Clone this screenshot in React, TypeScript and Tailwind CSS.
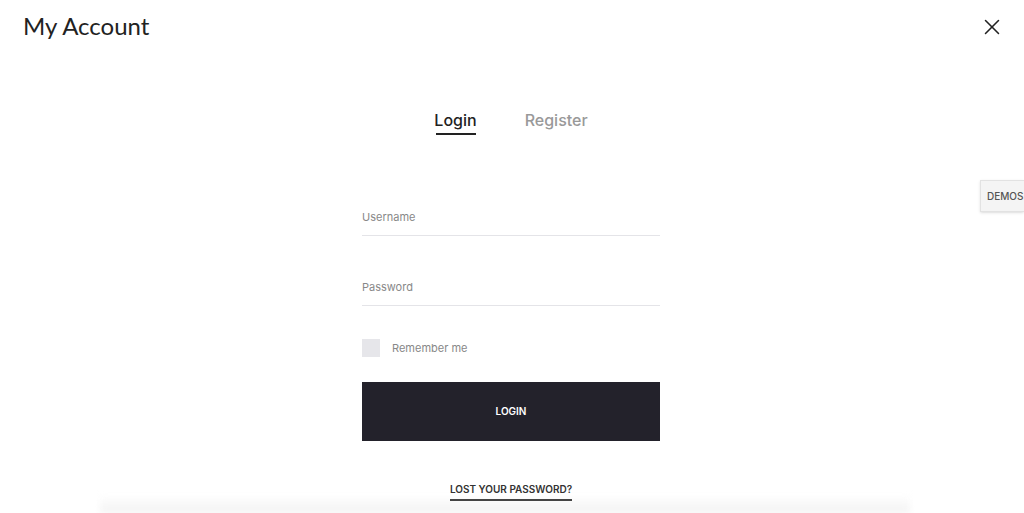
import { X } from 'lucide-react';

export default function App() {
  return (
    <div className="relative h-[513px] w-[1024px] overflow-hidden bg-white font-['Inter',sans-serif]">
      <div className="pointer-events-none absolute bottom-0 left-[100px] h-[18px] w-[810px] bg-gradient-to-b from-white to-[#f2f2f2] blur-[3px]" />

      <div className="flex items-start justify-between pl-[23px] pr-[19px] pt-[10px]">
        <h1 className="font-['Lato',sans-serif] text-[24px] leading-[32px] text-[#222]">My Account</h1>
        <button className="mt-[4px] text-[#222]">
          <X size={26} strokeWidth={1.4} />
        </button>
      </div>

      <div className="mt-[68px] flex justify-center gap-[48px] pr-[2px]">
        <div className="flex flex-col items-center">
          <span className="text-[16px] font-medium leading-[20px] text-[#222]">Login</span>
          <span className="mt-[3px] h-[2px] w-[40px] bg-[#222]" />
        </div>
        <span className="text-[16px] font-medium leading-[20px] text-[#999]">Register</span>
      </div>

      <div className="relative flex justify-center pr-[2px]">
        <form className="mt-[74px] flex w-[298px] flex-col">
          <label className="border-b border-[#e4e4e8] pb-[10px] text-[11px] leading-[16px] text-[#888]">Username</label>
          <label className="mt-[43px] border-b border-[#e4e4e8] pb-[10px] text-[11px] leading-[16px] text-[#888]">Password</label>
          <div className="mt-[33px] flex items-center gap-[12px]">
            <span className="h-[18px] w-[18px] bg-[#e6e6ea]" />
            <span className="text-[11px] text-[#888]">Remember me</span>
          </div>
          <button type="button" className="mt-[25px] h-[59px] bg-[#23222b] text-[10px] font-semibold text-white">
            LOGIN
          </button>
          <div className="mt-[42px] flex justify-center">
            <a className="flex flex-col items-stretch gap-[4px]">
              <span className="text-[10px] font-semibold leading-[12px] text-[#333]">LOST YOUR PASSWORD?</span>
              <span className="h-[2px] bg-[#444]" />
            </a>
          </div>
        </form>
      </div>

      <div className="absolute right-0 top-[180px] flex h-[32px] w-[44px] items-center border border-r-0 border-[#e2e2e2] bg-[#f4f4f4] pl-[6px] text-[10px] font-medium text-[#555] shadow-sm">
        DEMOS
      </div>
    </div>
  );
}
